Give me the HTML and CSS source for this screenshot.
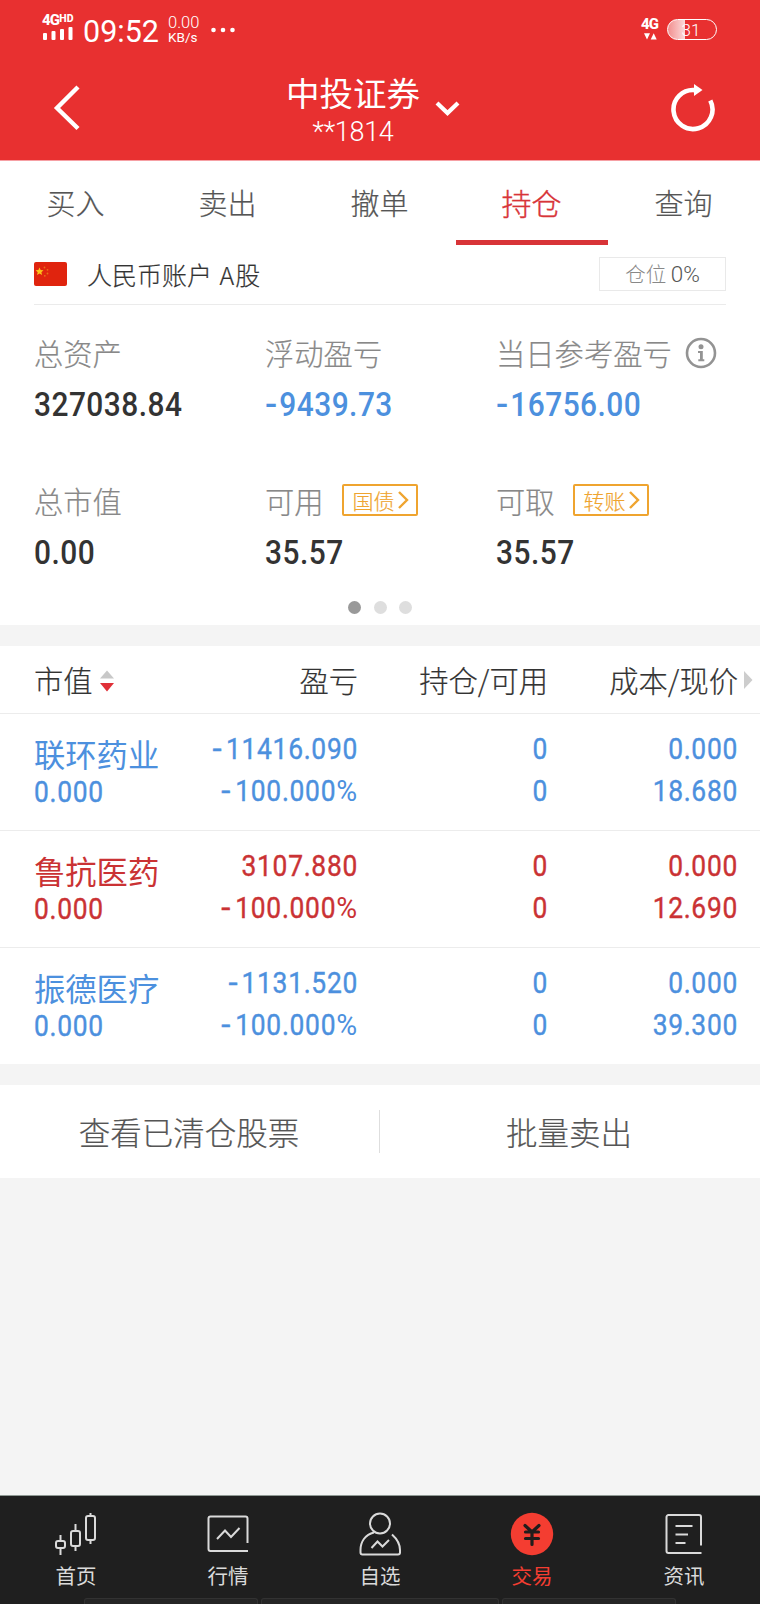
FILE: index.html
```html
<!DOCTYPE html>
<html lang="zh-CN">
<head>
<meta charset="utf-8">
<title>持仓</title>
<link rel="stylesheet" href="styles.css">
</head>
<body>
<div class="phone">
  <header class="top">
    <div class="status">
      <div class="signal">
        <div class="signal-type">4G<span class="hd">HD</span></div>
        <svg width="30" height="14" viewBox="0 0 30 14" fill="#fff"><rect x="0" y="6" width="4" height="7" rx="1"/><rect x="8.5" y="4" width="4" height="9" rx="1"/><rect x="17" y="2" width="4" height="11" rx="1"/><rect x="25.5" y="0" width="4" height="13" rx="1"/></svg>
      </div>
      <div class="clock">09:52</div>
      <div class="speed"><span>0.00</span><span>KB/s</span></div>
      <svg class="more" width="24" height="6" viewBox="0 0 24 6" fill="#fff"><circle cx="2.5" cy="3" r="2.3"/><circle cx="12" cy="3" r="2.3"/><circle cx="21.5" cy="3" r="2.3"/></svg>
      <div class="net">
        <span>4G</span>
        <svg width="13" height="7" viewBox="0 0 13 7" fill="#fff"><path d="M0 0.3h6L3 6.5z"/><path d="M6.7 6.5h6L9.7 .3z"/></svg>
      </div>
      <div class="battery"><span>31</span></div>
    </div>
    <div class="appbar">
      <svg class="back" width="28" height="48" viewBox="0 0 28 48" fill="none" stroke="#fff" stroke-width="4.4"><path d="M26 3 5 24l21 20.5"/></svg>
      <div class="title">
        <div class="broker">中投证券</div>
        <div class="acct">**1814</div>
      </div>
      <svg class="chev" width="26" height="18" viewBox="0 0 26 18" fill="none" stroke="#fff" stroke-width="4.2"><path d="M3 3l10.500 10L24 3"/></svg>
      <svg class="refresh" width="46" height="50" viewBox="0 0 46 50" fill="none"><path d="M25 8.1A19.5 19.5 0 1 0 40.3 18.5" stroke="#fff" stroke-width="4.6"/><path d="M24 2l8.5 6L24 14z" fill="#fff"/></svg>
    </div>
  </header>

  <nav class="tabs">
    <div class="tab">买入</div>
    <div class="tab">卖出</div>
    <div class="tab">撤单</div>
    <div class="tab active">持仓</div>
    <div class="tab">查询</div>
  </nav>

  <section class="account">
    <div class="account-row">
      <svg class="flag" width="33" height="24" viewBox="0 0 33 24"><rect width="33" height="24" rx="2" fill="#e0240e"/><path d="M5.5 5.5l1.2 2.6 2.8.2-2.1 1.9.7 2.8-2.6-1.5L3 13l.7-2.8-2.1-1.9 2.8-.2z" fill="#fbc21a"/><g fill="#e8701a"><circle cx="10.5" cy="5.5" r=".9"/><circle cx="13.5" cy="7.8" r=".9"/><circle cx="13.5" cy="11.5" r=".9"/><circle cx="10.8" cy="13.8" r=".9"/></g></svg>
      <div class="account-name">人民币账户 <span>A股</span></div>
      <div class="position">仓位 <span>0%</span></div>
    </div>
    <div class="stats">
      <div class="stat"><div class="label">总资产</div><div class="value">327038.84</div></div>
      <div class="stat"><div class="label">浮动盈亏</div><div class="value blue"><i>-</i>9439.73</div></div>
      <div class="stat"><div class="label">当日参考盈亏<svg class="info" width="32" height="32" viewBox="0 0 32 32"><circle cx="16" cy="16" r="14" fill="none" stroke="#939393" stroke-width="2.6"/><circle cx="16" cy="9.8" r="2.5" fill="#939393"/><path d="M13 14h4.8v8.3h1.5v2h-6v-2h1.7v-6.3h-2z" fill="#939393"/></svg></div><div class="value blue"><i>-</i>16756.00</div></div>
      <div class="stat"><div class="label">总市值</div><div class="value">0.00</div></div>
      <div class="stat"><div class="label">可用<span class="tag">国债<svg width="11" height="18" viewBox="0 0 11 18" fill="none" stroke="#efa42f" stroke-width="2.4"><path d="M1 1l8 8-8 8"/></svg></span></div><div class="value">35.57</div></div>
      <div class="stat"><div class="label">可取<span class="tag">转账<svg width="11" height="18" viewBox="0 0 11 18" fill="none" stroke="#efa42f" stroke-width="2.4"><path d="M1 1l8 8-8 8"/></svg></span></div><div class="value">35.57</div></div>
    </div>
    <div class="dots"><i class="on"></i><i></i><i></i></div>
  </section>

  <section class="holdings">
    <div class="thead">
      <div class="first">市值<svg width="14" height="22" viewBox="0 0 14 22"><path d="M0 8.5h14L7 .5z" fill="#c8c8c8"/><path d="M0 13h14l-7 8.5z" fill="#e03038"/></svg></div>
      <div>盈亏</div><div>持仓/可用</div><div>成本/现价</div>
      <svg class="next" width="9" height="18" viewBox="0 0 9 18"><path d="M0 0l8.5 9L0 18z" fill="#cdcdcd"/></svg>
    </div>
    <div class="row blue">
      <div class="first"><b>联环药业</b><span>0.000</span></div>
      <div><span><i>-</i>11416.090</span><span><i>-</i>100.000<em>%</em></span></div>
      <div><span>0</span><span>0</span></div>
      <div><span>0.000</span><span>18.680</span></div>
    </div>
    <div class="row red">
      <div class="first"><b>鲁抗医药</b><span>0.000</span></div>
      <div><span>3107.880</span><span><i>-</i>100.000<em>%</em></span></div>
      <div><span>0</span><span>0</span></div>
      <div><span>0.000</span><span>12.690</span></div>
    </div>
    <div class="row blue">
      <div class="first"><b>振德医疗</b><span>0.000</span></div>
      <div><span><i>-</i>1131.520</span><span><i>-</i>100.000<em>%</em></span></div>
      <div><span>0</span><span>0</span></div>
      <div><span>0.000</span><span>39.300</span></div>
    </div>
  </section>

  <section class="actions">
    <div>查看已清仓股票</div>
    <div>批量卖出</div>
  </section>

  <footer class="bottom">
    <div class="item">
      <svg width="44" height="44" viewBox="0 0 44 44" fill="none" stroke="#dadada" stroke-width="2"><rect x="2" y="29" width="9" height="7" rx="2"/><path d="M6.500 23v6M6.500 36v7"/><rect x="17" y="19" width="9" height="15" rx="2"/><path d="M21.500 12v7M21.500 34v5"/><rect x="32" y="4" width="9" height="24" rx="2"/><path d="M36.500 1v3M36.500 28v4"/></svg>
      <span>首页</span>
    </div>
    <div class="item">
      <svg width="44" height="44" viewBox="0 0 44 44" fill="none" stroke="#dadada" stroke-width="2"><path d="M41.500 31V6.500a2 2 0 0 0-2-2h-35a2 2 0 0 0-2 2v30.500a2 2 0 0 0 2 2h37.500"/><path d="M11 27l8-8.500 6 6.500 8.500-9"/></svg>
      <span>行情</span>
    </div>
    <div class="item">
      <svg width="44" height="44" viewBox="0 0 44 44" fill="none" stroke="#dadada" stroke-width="2"><circle cx="22" cy="11.500" r="10"/><path d="M16 20.500C7 22.500 2.500 30 2.500 38v2.500a2 2 0 0 0 2 2h35.500a2 2 0 0 0 2-2V38c0-6-3-11-8-15.500"/><path d="M13.500 36l6-6.500 5 5 6.500-6.500"/></svg>
      <span>自选</span>
    </div>
    <div class="item active">
      <svg width="44" height="44" viewBox="0 0 44 44"><circle cx="22" cy="22" r="21.200" fill="#f43d31"/><path d="M15 13.500l7 6.500 7-6.500M15.500 20h13M15.500 26.500h13M22 20v12.500" fill="none" stroke="#211d1c" stroke-width="3.200" stroke-linecap="round"/></svg>
      <span>交易</span>
    </div>
    <div class="item">
      <svg width="44" height="44" viewBox="0 0 44 44" fill="none" stroke="#dadada" stroke-width="2"><path d="M39 33.500V5a2 2 0 0 0-2-2H6.500a2 2 0 0 0-2 2v34a2 2 0 0 0 2 2H39.500"/><path d="M13.500 14h17M13.500 22.500h12.500M13.500 31h10"/></svg>
      <span>资讯</span>
    </div>
    <div class="keys"><i></i><i></i><i></i></div>
  </footer>
</div>
</body>
</html>
```

FILE: styles.css
```css
* { box-sizing: border-box; }
body { margin: 0; background: #f4f4f4; }
svg { display: block; flex: none; }
i, em { font-style: normal; }
.phone {
  width: 760px;
  height: 1604px;
  display: flex;
  flex-direction: column;
  overflow: hidden;
  font-family: "Noto Sans CJK SC", sans-serif;
  font-weight: 300;
  color: #333;
}

/* header */
.top { height: 161px; background: #e83030; border-bottom: 1px solid #f6a0a4; color: #fff; }
.status { height: 60px; padding-left: 42px; display: flex; align-items: flex-start; font-family: Roboto, sans-serif; }
.signal { width: 41px; padding-top: 14px; }
.signal-type { display: flex; font: 800 15px/13px Roboto, sans-serif; letter-spacing: -0.8px; }
.signal svg { margin-left: 1px; }
.hd { font-size: 10.5px; line-height: 9px; letter-spacing: 0; }
.clock { width: 85px; padding-top: 14px; font-size: 30.5px; line-height: 36px; font-weight: 400; }
.speed { width: 43px; padding-top: 16px; font-size: 16.5px; line-height: 14px; font-weight: 300; display: flex; flex-direction: column; white-space: nowrap; }
.speed span:last-child { font-size: 13.5px; font-weight: 400; }
.more { margin-top: 27px; }
.net { margin-left: auto; width: 26px; padding-top: 18px; font-weight: 800; font-size: 15px; line-height: 13px; letter-spacing: -0.8px; }
.net span { display: block; }
.net svg { margin: 2px 0 0 3px; }
.battery {
  width: 50px; height: 21px; margin: 19px 43px 0 0;
  border: 1.5px solid #fff; border-radius: 11px;
  background: linear-gradient(90deg, #f28f8f, #fbdada 17px, transparent 17px);
  text-align: center; font-size: 17px; line-height: 20px; padding-right: 2px;
}
.appbar { height: 100px; padding-left: 52px; display: flex; align-items: flex-start; }
.back { margin-top: 24px; }
.title { width: 136px; margin-left: 205px; padding-top: 12px; text-align: center; }
.broker { font-size: 33.5px; line-height: 40px; font-weight: 400; }
.acct { font: 300 27px/40px Roboto, sans-serif; letter-spacing: -0.3px; }
.chev { margin: 40px 0 0 13px; }
.refresh { margin: 22px 44px 0 auto; }

/* tabs */
.tabs { height: 84px; background: #fff; display: flex; }
.tab { flex: 1; text-align: center; font-size: 29px; line-height: 82px; height: 84px; color: #555; -webkit-text-stroke: 0.2px; padding-right: 1px; }
.tab.active { color: #d83438; border-bottom: 5px solid #d83438; font-size: 30px; -webkit-text-stroke: 0.4px; }

/* account summary */
.account { height: 380px; background: #fff; padding: 0 34px; }
.account-row { height: 60px; display: flex; align-items: center; border-bottom: 1px solid #ebebeb; padding-bottom: 1px; }
.flag { margin-top: -1px; }
.account-name { margin-left: 20px; font-size: 25px; line-height: 36px; margin-top: 0; -webkit-text-stroke: 0.2px; }
.account-name span { margin-left: 2px; letter-spacing: 1px; }
.position { margin: 0 0 0 auto; width: 127px; height: 34px; border: 1px solid #e9e9e9; font-size: 20.500px; line-height: 31px; color: #888; text-align: center; }
.position span { font: 300 22.500px Roboto, sans-serif; color: #555; }
.stats { display: grid; grid-template-columns: 231px 231px 230px; grid-template-rows: 148px 148px; padding-top: 29px; }
.label { height: 38px; display: flex; align-items: center; font-size: 29.300px; line-height: 36px; padding-bottom: 2px; color: #888; white-space: nowrap; -webkit-text-stroke: 0.2px; }
.info { margin: 1px 0 0 13px; }
.value { margin-top: 14px; font: 500 32.500px/39px Roboto, sans-serif; letter-spacing: 0.5px; transform: scaleX(0.92); transform-origin: left; }
.value i { display: inline-block; margin-right: 4px; transform: scaleX(1.2); transform-origin: left; }
.tag { height: 32px; margin: 0 0 0 18px; padding: 0 7px 0 9px; display: flex; align-items: center; gap: 3px; border: 2px solid #efa42f; border-radius: 2px; color: #efa42f; font-size: 21px; line-height: 26px; }
.blue { color: #4c90de; }
.red { color: #ca3234; }
.dots { height: 13px; margin-top: -29px; display: flex; justify-content: center; gap: 12.500px; }
.dots i { width: 13px; height: 13px; border-radius: 50%; background: #dedede; }
.dots .on { background: #999; }

/* holdings */
.holdings { margin-top: 21px; background: #fff; }
.thead, .row { display: grid; grid-template-columns: 150px 174px 190px 190px 1fr; padding-left: 34px; text-align: right; }
.thead { height: 68px; align-items: center; border-bottom: 1px solid #ececec; font-size: 29.300px; line-height: 64px; padding-bottom: 2px; white-space: nowrap; -webkit-text-stroke: 0.2px; }
.first { text-align: left; }
.thead .first { display: flex; align-items: center; gap: 7px; }
.thead .first svg { margin-top: 4px; }
.next { margin: 2px 0 0 6px; }
.row { height: 117px; padding-top: 14px; border-bottom: 1px solid #ececec; }
.row:last-child { height: 116px; border-bottom: 0; }
.row span { display: block; font: 400 30px/42px Roboto, sans-serif; letter-spacing: 0.8px; -webkit-text-stroke: 0.400px; transform: scaleX(0.88); transform-origin: right; white-space: nowrap; }
.row i { display: inline-block; margin-right: 4px; transform: scaleX(1.25); transform-origin: right; }
.row em { display: inline-block; transform: scaleX(1.08); transform-origin: right; margin-left: 2px; -webkit-text-stroke: 0; }
.row .first b { display: block; font-weight: 400; font-size: 31.300px; line-height: 52px; white-space: nowrap; }
.row .first span { line-height: 24px; transform-origin: left; }

/* actions */
.actions { height: 93px; margin-top: 21px; background: #fff; display: flex; align-items: center; font-size: 31.500px; color: #555; -webkit-text-stroke: 0.2px; }
.actions div { flex: 1; height: 43px; line-height: 43px; text-align: center; padding-right: 2px; }
.actions div + div { border-left: 1px solid #dedede; margin-left: -1px; }

/* bottom navigation */
.bottom { height: 109px; margin-top: auto; background: #1f1f1f; border-top: 1px solid #8f9994; display: flex; position: relative; }
.item { flex: 1; padding-top: 16px; display: flex; flex-direction: column; align-items: center; color: #dadada; font-size: 20.500px; line-height: 38px; font-weight: 400; }
.item.active { color: #f43d31; }
.keys { position: absolute; left: 84px; bottom: 0; width: 592px; height: 6px; display: grid; grid-template-columns: 174px 1fr 174px; gap: 3px; }
.keys i { border: 1px solid #323232; border-bottom: 0; background: #252525; border-radius: 3px 3px 0 0; }
```
